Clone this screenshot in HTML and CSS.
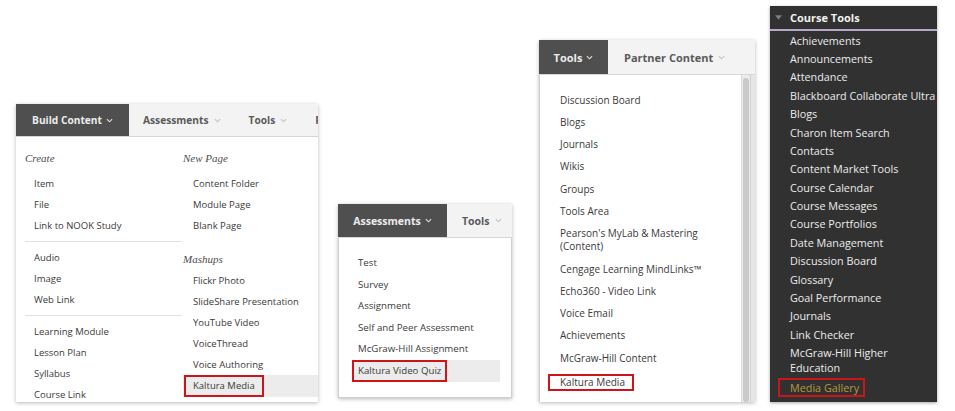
FILE: index.html
```html
<!DOCTYPE html>
<html lang="en">
<head>
<meta charset="utf-8">
<title>Kaltura menus</title>
<link rel="stylesheet" href="styles.css">
</head>
<body>
<div class="canvas">

  <!-- Panel 1: Build Content -->
  <section class="panel p1">
    <div class="menubar">
      <div class="tab active">Build Content <svg class="chev" viewBox="0 0 8 5"><polyline points="1,1 4,4 7,1"/></svg></div>
      <div class="tab">Assessments <svg class="chev" viewBox="0 0 8 5"><polyline points="1,1 4,4 7,1"/></svg></div>
      <div class="tab">Tools <svg class="chev" viewBox="0 0 8 5"><polyline points="1,1 4,4 7,1"/></svg></div>
      <div class="tab">Partner Content</div>
    </div>
    <div class="dd cols">
      <div class="col col-a">
        <div class="heading">Create</div>
        <div class="item">Item</div>
        <div class="item">File</div>
        <div class="item">Link to NOOK Study</div>
        <div class="sep"></div>
        <div class="item">Audio</div>
        <div class="item">Image</div>
        <div class="item">Web Link</div>
        <div class="sep"></div>
        <div class="item">Learning Module</div>
        <div class="item">Lesson Plan</div>
        <div class="item">Syllabus</div>
        <div class="item">Course Link</div>
      </div>
      <div class="col col-b">
        <div class="heading">New Page</div>
        <div class="item">Content Folder</div>
        <div class="item">Module Page</div>
        <div class="item">Blank Page</div>
        <div class="heading mash">Mashups</div>
        <div class="item tight">Flickr Photo</div>
        <div class="item">SlideShare Presentation</div>
        <div class="item">YouTube Video</div>
        <div class="item">VoiceThread</div>
        <div class="item">Voice Authoring</div>
        <div class="item hl"><span class="redbox">Kaltura Media</span></div>
      </div>
    </div>
  </section>

  <!-- Panel 2: Assessments -->
  <section class="panel p2">
    <div class="menubar">
      <div class="tab active">Assessments <svg class="chev" viewBox="0 0 8 5"><polyline points="1,1 4,4 7,1"/></svg></div>
      <div class="tab">Tools <svg class="chev" viewBox="0 0 8 5"><polyline points="1,1 4,4 7,1"/></svg></div>
    </div>
    <div class="dd boxed">
      <div class="item">Test</div>
      <div class="item">Survey</div>
      <div class="item">Assignment</div>
      <div class="item">Self and Peer Assessment</div>
      <div class="item">McGraw-Hill Assignment</div>
      <div class="item hl"><span class="redbox">Kaltura Video Quiz</span></div>
    </div>
  </section>

  <!-- Panel 3: Tools -->
  <section class="panel p3">
    <div class="menubar">
      <div class="tab active">Tools <svg class="chev" viewBox="0 0 8 5"><polyline points="1,1 4,4 7,1"/></svg></div>
      <div class="tab">Partner Content <svg class="chev" viewBox="0 0 8 5"><polyline points="1,1 4,4 7,1"/></svg></div>
    </div>
    <div class="dd scroller">
      <div class="list">
        <div class="item">Discussion Board</div>
        <div class="item">Blogs</div>
        <div class="item">Journals</div>
        <div class="item">Wikis</div>
        <div class="item">Groups</div>
        <div class="item">Tools Area</div>
        <div class="item">Pearson's MyLab &amp; Mastering<br>(Content)</div>
        <div class="item">Cengage Learning MindLinks™</div>
        <div class="item">Echo360 - Video Link</div>
        <div class="item">Voice Email</div>
        <div class="item">Achievements</div>
        <div class="item">McGraw-Hill Content</div>
        <div class="item"><span class="redbox">Kaltura Media</span></div>
        <div class="item">Video Search</div>
      </div>
      <div class="track"><div class="thumb"></div></div>
      <div class="edge"></div>
    </div>
  </section>

  <!-- Panel 4: Course Tools sidebar -->
  <section class="panel p4">
    <div class="side-head"><svg class="tri" viewBox="0 0 8 5"><polygon points="0,0 8,0 4,5"/></svg>Course Tools</div>
    <div class="side-list">
      <div class="sitem">Achievements</div>
      <div class="sitem">Announcements</div>
      <div class="sitem">Attendance</div>
      <div class="sitem">Blackboard Collaborate Ultra</div>
      <div class="sitem">Blogs</div>
      <div class="sitem">Charon Item Search</div>
      <div class="sitem">Contacts</div>
      <div class="sitem">Content Market Tools</div>
      <div class="sitem">Course Calendar</div>
      <div class="sitem">Course Messages</div>
      <div class="sitem">Course Portfolios</div>
      <div class="sitem">Date Management</div>
      <div class="sitem">Discussion Board</div>
      <div class="sitem">Glossary</div>
      <div class="sitem">Goal Performance</div>
      <div class="sitem">Journals</div>
      <div class="sitem">Link Checker</div>
      <div class="sitem">McGraw-Hill Higher<br>Education</div>
      <div class="sitem gold"><span class="redbox">Media Gallery</span></div>
    </div>
  </section>

</div>
</body>
</html>
```

FILE: styles.css
```css
* { box-sizing: border-box; }

html, body {
  margin: 0;
  padding: 0;
  background: #ffffff;
}

body {
  font-family: "Open Sans", "Liberation Sans", sans-serif;
  color: #3a3a3a;
  width: 955px;
  height: 411px;
  overflow: hidden;
}

.canvas {
  display: flex;
  align-items: flex-start;
  padding-left: 16px;
}

.panel {
  background: #ffffff;
  overflow: hidden;
  box-shadow: 0 1px 4px rgba(0, 0, 0, 0.28);
  display: flex;
  flex-direction: column;
  flex: none;
}

/* ---------- menu bar ---------- */
.menubar {
  display: flex;
  align-items: stretch;
  background: #f3f3f3;
  border-bottom: 1px solid #d6d6d6;
  flex: none;
  white-space: nowrap;
}

.tab {
  flex: none;
  display: flex;
  align-items: center;
  gap: 5px;
  padding: 0 13px;
  font-weight: 700;
  color: #5a5a5a;
  font-size: 10.5px;
}

.tab.active {
  background: #4f4f4f;
  color: #ececec;
  justify-content: center;
  padding: 0;
  gap: 4px;
}

.chev {
  width: 7px;
  height: 5px;
  fill: none;
  stroke: #c2c2c2;
  stroke-width: 1.3;
}

.tab.active .chev { stroke: #e0e0e0; }

/* ---------- dropdown ---------- */
.dd { flex: 1; }

.item {
  white-space: nowrap;
}

.hl { background: #ececec; }

.redbox {
  display: inline-block;
  border: 2px solid #cc1419;
}

/* Panel 1 */
.p1 {
  width: 302px;
  height: 298px;
  margin-top: 104px;
}
.p1 .menubar { height: 33px; }
.p1 .tab { padding: 0 14px; font-size: 10.2px; }
.p1 .tab.active { width: 113px; padding: 0; }

.cols {
  display: flex;
  padding-top: 11px;
}
.col-a { width: 167px; padding-left: 9px; flex: none; }
.col-b { flex: 1; }

.heading {
  font-family: "Liberation Serif", "DejaVu Serif", serif;
  font-style: italic;
  font-size: 11px;
  color: #4e4e4e;
  height: 21px;
  line-height: 21px;
  margin-bottom: 4px;
}
.col-b .heading.mash { margin-top: 13px; margin-bottom: 0; }

.p1 .item {
  font-size: 9.5px;
  height: 21px;
  line-height: 21px;
}
.col-a .item { padding-left: 9px; }
.col-b .item { padding-left: 10px; }
.col-b .item.hl { padding-left: 1px; height: 22px; display: flex; align-items: stretch; }
.col-b .item.hl .redbox { padding: 0 7px; line-height: 18px; }

.sep {
  height: 1px;
  background: #e2e2e2;
  margin: 5px 0 5px 0;
  width: 157px;
}

/* Panel 2 */
.p2 {
  width: 174px;
  height: 194px;
  margin-top: 204px;
  margin-left: 20px;
}
.p2 .menubar { height: 34px; }
.p2 .tab.active { width: 109px; padding: 0; }
.p2 .tab { padding: 0 15px; }

.boxed {
  border: 1px solid #cfcfcf;
  border-top: none;
  padding: 14px 11px 0 13px;
}
.p2 .item {
  font-size: 9.7px;
  height: 21.6px;
  line-height: 21.6px;
  padding-left: 6px;
}
.p2 .item.hl { padding-left: 0; display: flex; align-items: stretch; }
.p2 .item.hl .redbox { padding: 0 4px; line-height: 18px; }

/* Panel 3 */
.p3 {
  width: 216px;
  height: 362px;
  margin-top: 40px;
  margin-left: 27px;
}
.p3 .menubar { height: 35px; }
.p3 .tab { font-size: 11px; padding: 0 16px; }
.p3 .tab.active { width: 69px; padding: 0; }

.scroller {
  display: flex;
  border-left: 1px solid #cfcfcf;
  overflow: hidden;
}
.list {
  flex: 1;
  padding: 14px 0 0 20px;
}
.p3 .item {
  font-size: 10px;
  line-height: 13px;
  padding: 4.65px 0;
}
.p3 .item .redbox {
  margin-left: -12px;
  padding: 0 7px 0 10px;
  line-height: 13px;
}
.track {
  width: 9px;
  background: #ececec;
  border-left: 1px solid #d9d9d9;
  padding: 3px 1px 0 1px;
  flex: none;
}
.thumb {
  height: 100%;
  background: #c9c9c9;
  border-radius: 3px;
}
.edge {
  width: 5px;
  flex: none;
  background: #e6e6e6;
  border-left: 1px solid #d0d0d0;
}

/* Panel 4 */
.p4 {
  width: 167px;
  height: 396px;
  margin-top: 6px;
  margin-left: 15px;
  background: #313131;
  box-shadow: 0 1px 3px rgba(0, 0, 0, 0.35);
}
.side-head {
  height: 25px;
  display: flex;
  align-items: center;
  border-bottom: 2px solid #b9a9c9;
  color: #f2f2f2;
  font-weight: 700;
  font-size: 11px;
  flex: none;
}
.tri {
  width: 7px;
  height: 5px;
  fill: #7d7d7d;
  margin: 0 8px 0 5px;
}
.side-list { padding-left: 20px; }
.sitem {
  color: #ececec;
  font-size: 10.8px;
  white-space: nowrap;
  line-height: 15px;
  padding: 1.7px 0;
}
.sitem.gold { color: #b49a3e; }
.sitem.gold .redbox {
  margin-left: -12px;
  padding: 0 4px 0 10px;
  line-height: 15px;
}
```
